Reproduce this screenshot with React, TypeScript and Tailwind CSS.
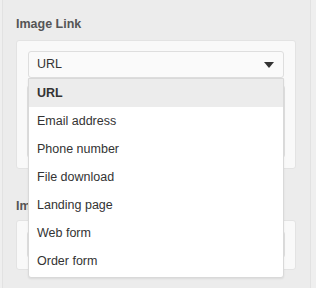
import React from "react";

const items = [
  "URL",
  "Email address",
  "Phone number",
  "File download",
  "Landing page",
  "Web form",
  "Order form",
];

export default function App() {
  return (
    <div
      className="w-[316px] h-[288px] bg-[#efefef] overflow-hidden"
      style={{ fontFamily: '"Liberation Sans", Arial, sans-serif' }}
    >
      <div className="ml-[2px] w-[309px] h-full bg-[#ececec] border-l border-r border-[#e2e2e2] pl-[13px] pt-[16px]">
        <div className="text-[12.5px] leading-[16px] font-bold text-[#555555]">Image Link</div>
        <div className="mt-[8px] w-[280px] rounded-[3px] border border-[#e3e3e3] bg-[#f9f9f9] pt-[10px] pb-[10px] pl-[10px]">
          <div className="relative ml-[1px] w-[256px]">
            <div className="h-[27px] rounded-[3px] border border-[#dedede] bg-[#fafafa] flex items-center justify-between pl-[8px] pr-[9px]">
              <span className="text-[12.5px] text-[#333333]">URL</span>
              <svg width="10" height="6" viewBox="0 0 10 6">
                <path d="M0 0 L10 0 L5 6 Z" fill="#333333" />
              </svg>
            </div>
            <div className="absolute left-0 top-[27px] z-10 w-[256px] bg-white border border-[#d9d9d9] rounded-b-[3px] shadow-[0_1px_2px_rgba(0,0,0,0.08)] pb-[2px]">
              {items.map((it, i) => (
                <div
                  key={it}
                  className={
                    i === 0
                      ? "h-[28px] flex items-center pl-[8px] bg-[#ececec] text-[12.5px] font-bold text-[#333333]"
                      : "h-[28px] flex items-center pl-[8px] text-[12.5px] text-[#333333]"
                  }
                >
                  {it}
                </div>
              ))}
            </div>
          </div>
          <div className="mt-[7px] w-[258px] h-[73px] rounded-[3px] border border-[#e0e0e0] bg-white"></div>
        </div>
        <div className="mt-[29px] text-[12.5px] leading-[16px] font-bold text-[#555555]">Image Alt Text</div>
        <div className="mt-[6px] w-[280px] rounded-[3px] border border-[#e3e3e3] bg-[#f9f9f9] pt-[10px] pb-[11px] pl-[10px]">
          <div className="w-[258px] h-[27px] rounded-[3px] border border-[#e0e0e0] bg-white"></div>
        </div>
      </div>
    </div>
  );
}
